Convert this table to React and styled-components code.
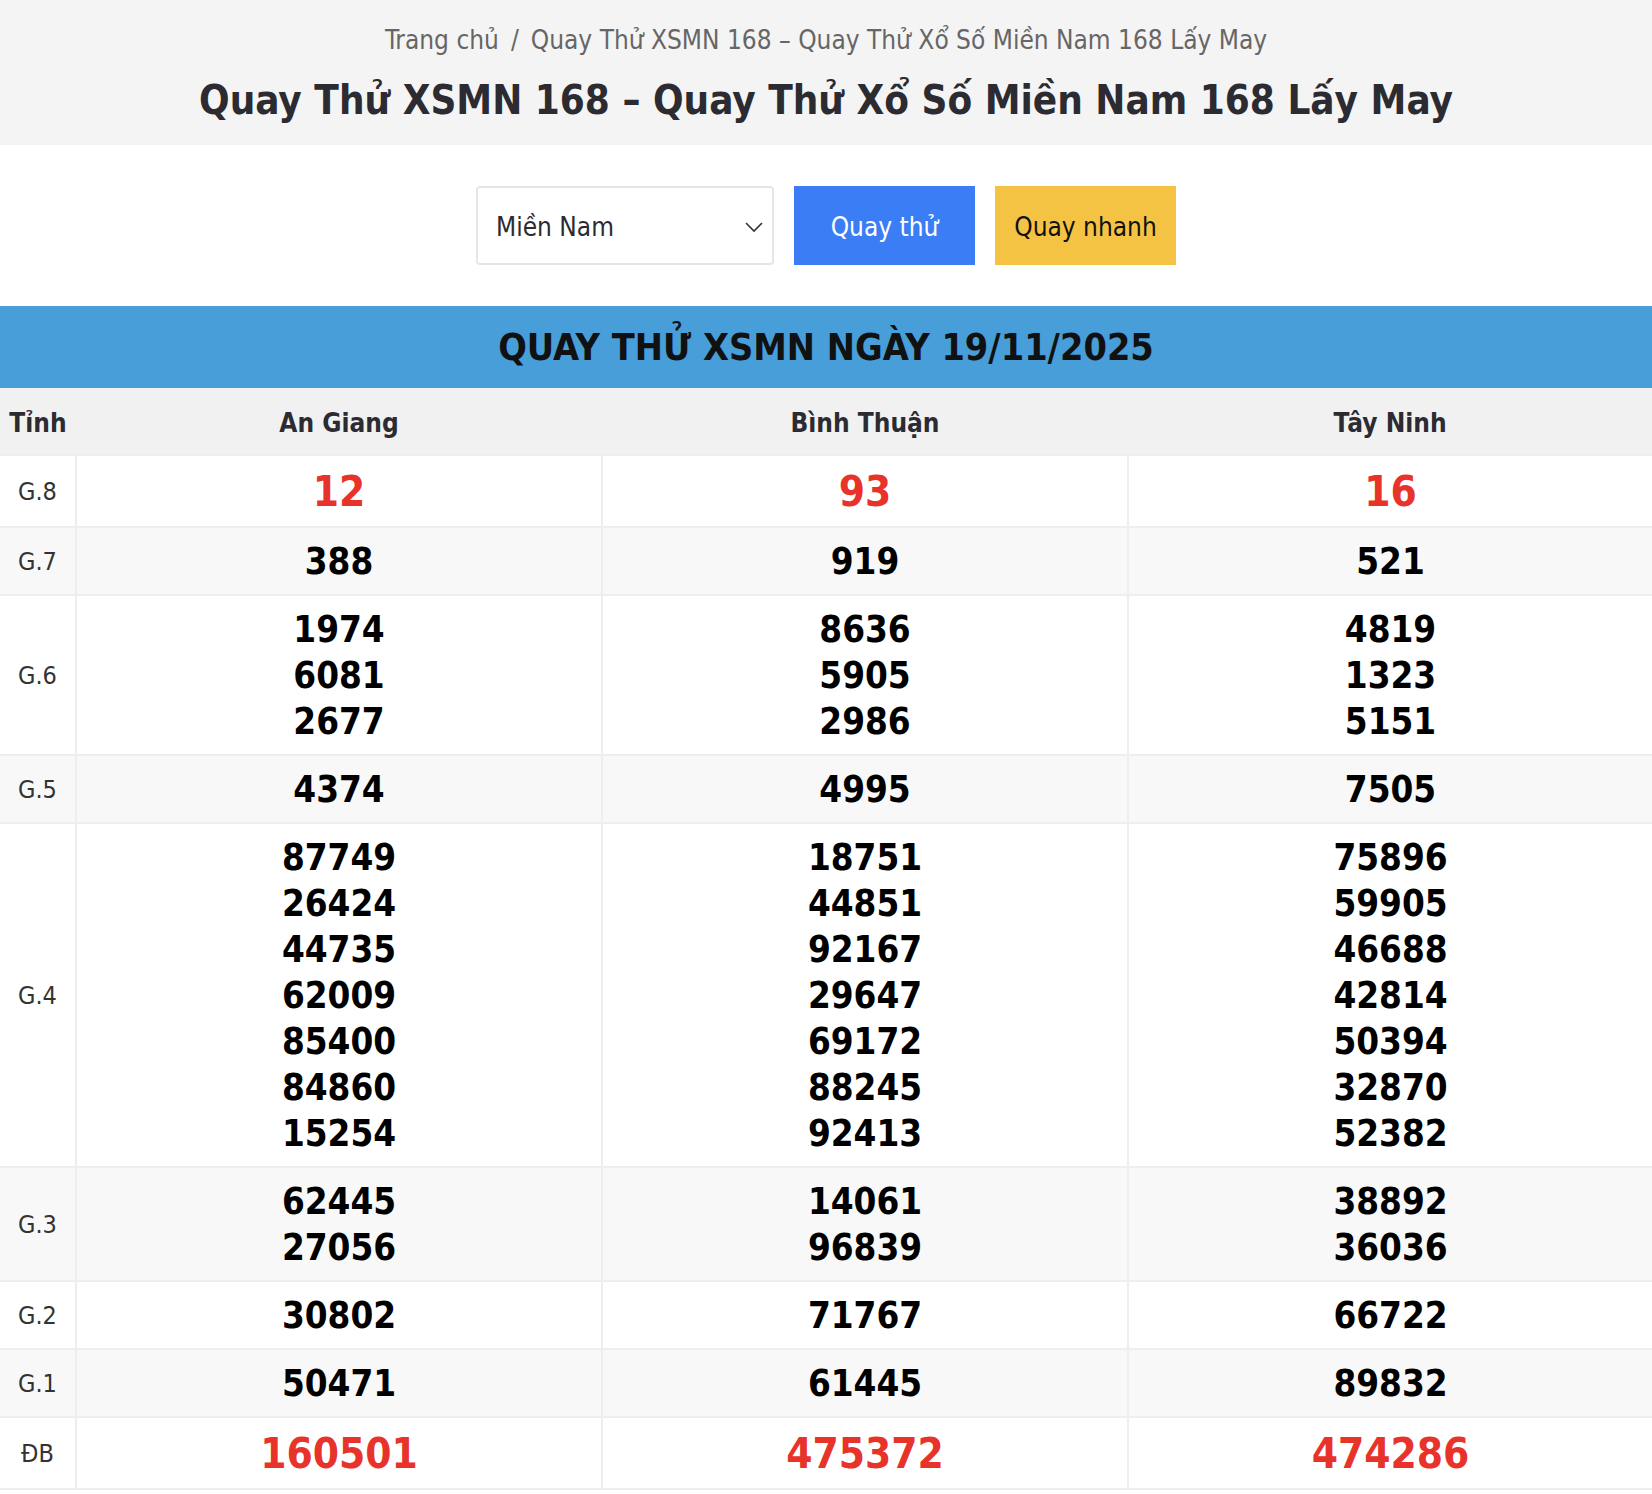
import React from "react";
import styled, { createGlobalStyle } from "styled-components";

const Global = createGlobalStyle`
  html, body { margin: 0; padding: 0; background: #fff; }
  body { font-family: "DejaVu Sans Condensed", "DejaVu Sans", "Liberation Sans", sans-serif; font-stretch: condensed; color: #2b2b31; }
  * { box-sizing: border-box; }
`;

const Page = styled.div`
  width: 1652px;
`;

const Hero = styled.header`
  background: #f4f4f4;
  height: 145px;
  display: flex;
  flex-direction: column;
  align-items: center;
  padding-top: 22px;
`;

const Crumbs = styled.nav`
  font-size: 26px;
  line-height: 36px;
  color: #666;
  display: flex;
  gap: 12px;
`;

const Title = styled.h1`
  margin: 16px 0 0;
  font-size: 40px;
  line-height: 52px;
  font-weight: 700;
  color: #2b2b31;
`;

const Controls = styled.div`
  display: flex;
  justify-content: center;
  gap: 20px;
  padding: 41px 0 41px;
`;

const Select = styled.div`
  width: 298px;
  height: 79px;
  border: 2px solid #e6e6e6;
  border-radius: 4px;
  display: flex;
  align-items: center;
  justify-content: space-between;
  padding: 3px 8px 0 18px;
  font-size: 26px;
  color: #2b2b31;
  background: #fff;
`;

const Button = styled.button`
  width: 181px;
  height: 79px;
  border: 0;
  border-radius: 0;
  padding: 3px 0 0;
  font-family: inherit;
  font-stretch: condensed;
  font-size: 26px;
  background: ${(p) => (p.$variant === "yellow" ? "#f5c343" : "#3b7df5")};
  color: ${(p) => (p.$variant === "yellow" ? "#111" : "#fff")};
  display: flex;
  align-items: center;
  justify-content: center;
`;

const Banner = styled.div`
  background: #489ed8;
  height: 82px;
  display: flex;
  align-items: center;
  justify-content: center;
  font-size: 37.5px;
  font-weight: 700;
  color: #111;
`;

const Table = styled.table`
  width: 1652px;
  border-collapse: collapse;
  table-layout: fixed;
  border-bottom: 2px solid #eeeeee;
`;

const HeadCell = styled.th`
  background: #f1f1f1;
  height: 67px;
  padding: 3px 0 0;
  font-size: 26px;
  font-weight: 700;
  color: #2b2b31;
  text-align: center;
`;

const Row = styled.tr`
  background: ${(p) => (p.$alt ? "#f8f8f8" : "#fff")};
  border-top: 2px solid #eeeeee;
`;

const Label = styled.td`
  font-size: 25px;
  color: #333;
  text-align: center;
  border-right: 2px solid #eeeeee;
  padding: 0;
`;

const Cell = styled.td`
  text-align: center;
  padding: ${(p) => (p.$big ? "10px 0 9px" : "10.5px 0 9.5px")};
  border-right: 2px solid #eeeeee;
  &:last-child { border-right: 0; }
`;

const Num = styled.div`
  font-weight: 700;
  font-size: ${(p) => (p.$big ? "42px" : "36.5px")};
  line-height: ${(p) => (p.$big ? "51px" : "46px")};
  color: ${(p) => (p.$big ? "#e8332a" : "#000")};
`;

const Chevron = () => (
  <svg width="20" height="12" viewBox="0 0 20 12" fill="none">
    <path d="M2 2 L10 10 L18 2" stroke="#333" strokeWidth="1.6" />
  </svg>
);

const rows = [
  { label: "G.8", big: true, data: [["12"], ["93"], ["16"]] },
  { label: "G.7", data: [["388"], ["919"], ["521"]] },
  { label: "G.6", data: [["1974", "6081", "2677"], ["8636", "5905", "2986"], ["4819", "1323", "5151"]] },
  { label: "G.5", data: [["4374"], ["4995"], ["7505"]] },
  {
    label: "G.4",
    data: [
      ["87749", "26424", "44735", "62009", "85400", "84860", "15254"],
      ["18751", "44851", "92167", "29647", "69172", "88245", "92413"],
      ["75896", "59905", "46688", "42814", "50394", "32870", "52382"],
    ],
  },
  { label: "G.3", data: [["62445", "27056"], ["14061", "96839"], ["38892", "36036"]] },
  { label: "G.2", data: [["30802"], ["71767"], ["66722"]] },
  { label: "G.1", data: [["50471"], ["61445"], ["89832"]] },
  { label: "ĐB", big: true, data: [["160501"], ["475372"], ["474286"]] },
];

export default function App() {
  return (
    <Page>
      <Global />
      <Hero>
        <Crumbs>
          <span>Trang chủ</span>
          <span>/</span>
          <span>Quay Thử XSMN 168 – Quay Thử Xổ Số Miền Nam 168 Lấy May</span>
        </Crumbs>
        <Title>Quay Thử XSMN 168 – Quay Thử Xổ Số Miền Nam 168 Lấy May</Title>
      </Hero>
      <Controls>
        <Select>
          <span>Miền Nam</span>
          <Chevron />
        </Select>
        <Button>Quay thử</Button>
        <Button $variant="yellow">Quay nhanh</Button>
      </Controls>
      <Banner>QUAY THỬ XSMN NGÀY 19/11/2025</Banner>
      <Table>
        <colgroup>
          <col style={{ width: 76 }} />
          <col style={{ width: 526 }} />
          <col style={{ width: 526 }} />
          <col style={{ width: 524 }} />
        </colgroup>
        <thead>
          <tr>
            <HeadCell>Tỉnh</HeadCell>
            <HeadCell>An Giang</HeadCell>
            <HeadCell>Bình Thuận</HeadCell>
            <HeadCell>Tây Ninh</HeadCell>
          </tr>
        </thead>
        <tbody>
          {rows.map((r, i) => (
            <Row key={r.label} $alt={i % 2 === 1}>
              <Label>{r.label}</Label>
              {r.data.map((nums, j) => (
                <Cell key={j} $big={r.big}>
                  {nums.map((n, k) => (
                    <Num key={k} $big={r.big}>{n}</Num>
                  ))}
                </Cell>
              ))}
            </Row>
          ))}
        </tbody>
      </Table>
    </Page>
  );
}
